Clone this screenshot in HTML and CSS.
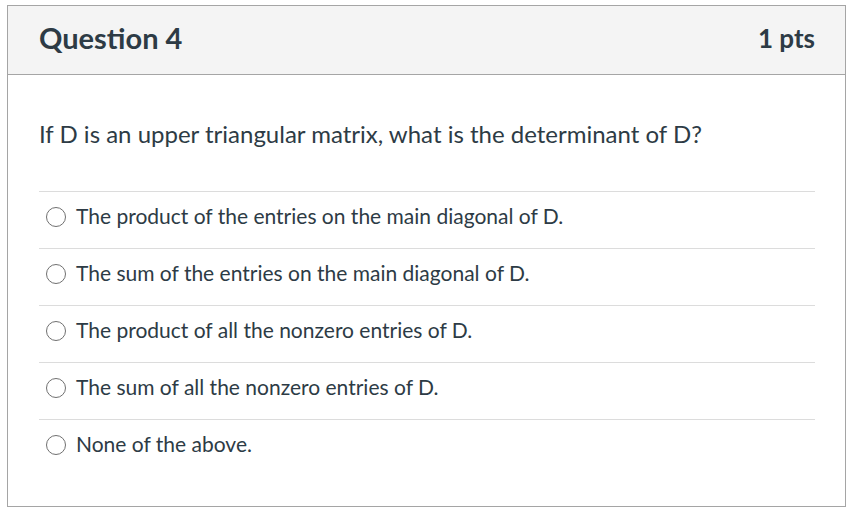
FILE: index.html
```html
<!DOCTYPE html>
<html>
<head>
<meta charset="utf-8">
<link rel="stylesheet" href="styles.css">
</head>
<body>
<div class="quiz">
  <div class="header">
    <h2 class="title">Question 4</h2>
    <div class="pts">1 pts</div>
  </div>
  <div class="content">
    <p class="question">If D is an upper triangular matrix, what is the determinant of D?</p>
    <div class="answers">
      <label class="answer"><span class="radio"></span><span>The product of the entries on the main diagonal of D.</span></label>
      <label class="answer"><span class="radio"></span><span>The sum of the entries on the main diagonal of D.</span></label>
      <label class="answer"><span class="radio"></span><span>The product of all the nonzero entries of D.</span></label>
      <label class="answer"><span class="radio"></span><span>The sum of all the nonzero entries of D.</span></label>
      <label class="answer"><span class="radio"></span><span>None of the above.</span></label>
    </div>
  </div>
</div>
</body>
</html>
```
FILE: styles.css
```css
html, body { margin: 0; padding: 0; background: #fff; }
body { font-family: Lato, "Liberation Sans", sans-serif; color: #2d3b45; }
.quiz {
  margin: 5px 0 0 7px;
  width: 839px;
  height: 502px;
  box-sizing: border-box;
  border: 1px solid #a5a5a5;
}
.header {
  height: 69px;
  box-sizing: border-box;
  background: #f4f4f4;
  border-bottom: 1px solid #a5a5a5;
  display: flex;
  align-items: center;
  justify-content: space-between;
  padding: 0 30px 4px 31px;
}
.title { margin: 0; font-size: 29px; font-weight: 700; line-height: 34px; }
.pts { font-size: 26px; font-weight: 700; color: #2d3b45; line-height: 30px; }
.content { padding: 0 30px 0 31px; }
.question { margin: 44px 0 0; font-size: 24px; line-height: 30px; }
.answers { margin-top: 42px; }
.answer {
  display: flex;
  align-items: center;
  height: 57px;
  box-sizing: border-box;
  padding-bottom: 10px;
  border-top: 1px solid #dcdcdc;
  font-size: 21px;
  line-height: 25px;
}
.radio {
  width: 20px; height: 20px;
  border: 1.5px solid #707070;
  border-radius: 50%;
  margin: 3px 10px 0 7px;
  box-sizing: border-box;
  flex: none;
}
```
